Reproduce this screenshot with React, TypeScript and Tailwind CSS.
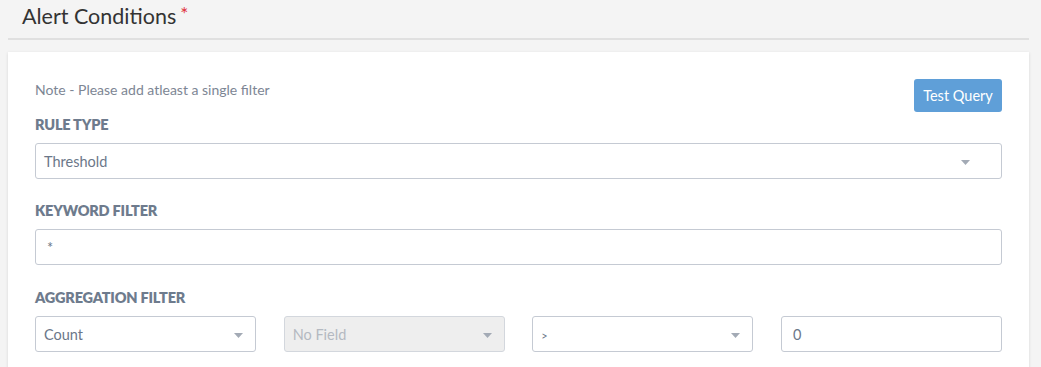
import React from "react";

function Caret({ className = "" }: { className?: string }) {
  return (
    <svg width="9" height="5" viewBox="0 0 9 5" className={className}>
      <path d="M0 0 L9 0 L4.5 5 Z" fill="#a3aab5" />
    </svg>
  );
}

function SelectBox({
  value,
  disabled = false,
  caretRight = "right-[12px]",
  small = false,
}: {
  value: string;
  disabled?: boolean;
  caretRight?: string;
  small?: boolean;
}) {
  return (
    <div
      className={`relative h-[36px] rounded-[3px] border border-[#c5cad3] flex items-center pl-[8px] ${
        disabled ? "bg-[#eeeeee] border-[#d3d7dd]" : "bg-white"
      }`}
    >
      <span
        className={`${small ? "text-[11px]" : "text-[14.5px]"} leading-none mt-[2px] ${
          disabled ? "text-[#b4b9c1]" : "text-[#6b7789]"
        }`}
      >
        {value}
      </span>
      <Caret className={`absolute top-[16px] ${caretRight}`} />
    </div>
  );
}

function InputBox({ value }: { value: string }) {
  return (
    <div className="h-[36px] rounded-[3px] border border-[#c5cad3] bg-white flex items-center pl-[11px]">
      <span className="text-[14.5px] leading-none mt-[2px] text-[#6b7789]">{value}</span>
    </div>
  );
}

function Label({ children }: { children: React.ReactNode }) {
  return (
    <div className="h-[20px] leading-[20px] pt-[1px] mb-[9px] text-[14.5px] font-extrabold text-[#6e7b8d] tracking-[-0.2px]">
      {children}
    </div>
  );
}

export default function App() {
  return (
    <div
      className="w-[1041px] h-[367px] bg-[#f4f4f4] overflow-hidden"
      style={{ fontFamily: "Lato, 'Open Sans', sans-serif" }}
    >
      <div className="h-[38px] pl-[22px] pb-[4px] flex items-center">
        <span className="text-[21.5px] text-[#333333] leading-none">Alert Conditions</span>
        <span className="text-[19px] text-[#e0303a] ml-[4px] -mt-[7px] leading-none">*</span>
      </div>
      <div className="ml-[8px] mr-[12px] border-t-[2px] border-[#e0e0e0]" />
      <div className="mt-[12px] ml-[8px] mr-[12px] bg-white shadow-[0_1px_3px_rgba(0,0,0,0.12)] px-[27px] pt-[27px] pb-[30px]">
        <div className="flex justify-between items-start">
          <div className="text-[14px] text-[#7d8694] leading-[22px]">
            Note - Please add atleast a single filter
          </div>
          <button className="h-[33px] w-[88px] rounded-[3px] bg-[#5f9fd8] text-white text-[14.5px]">
            Test Query
          </button>
        </div>
        <div className="mt-[2px] mb-[21px]">
          <Label>RULE TYPE</Label>
          <SelectBox value="Threshold" caretRight="right-[31px]" />
        </div>
        <div className="mb-[22px]">
          <Label>KEYWORD FILTER</Label>
          <InputBox value="*" />
        </div>
        <div>
          <Label>AGGREGATION FILTER</Label>
          <div className="grid grid-cols-4 gap-x-[27.5px]">
            <SelectBox value="Count" />
            <SelectBox value="No Field" disabled />
            <SelectBox value=">" small />
            <InputBox value="0" />
          </div>
        </div>
      </div>
    </div>
  );
}
